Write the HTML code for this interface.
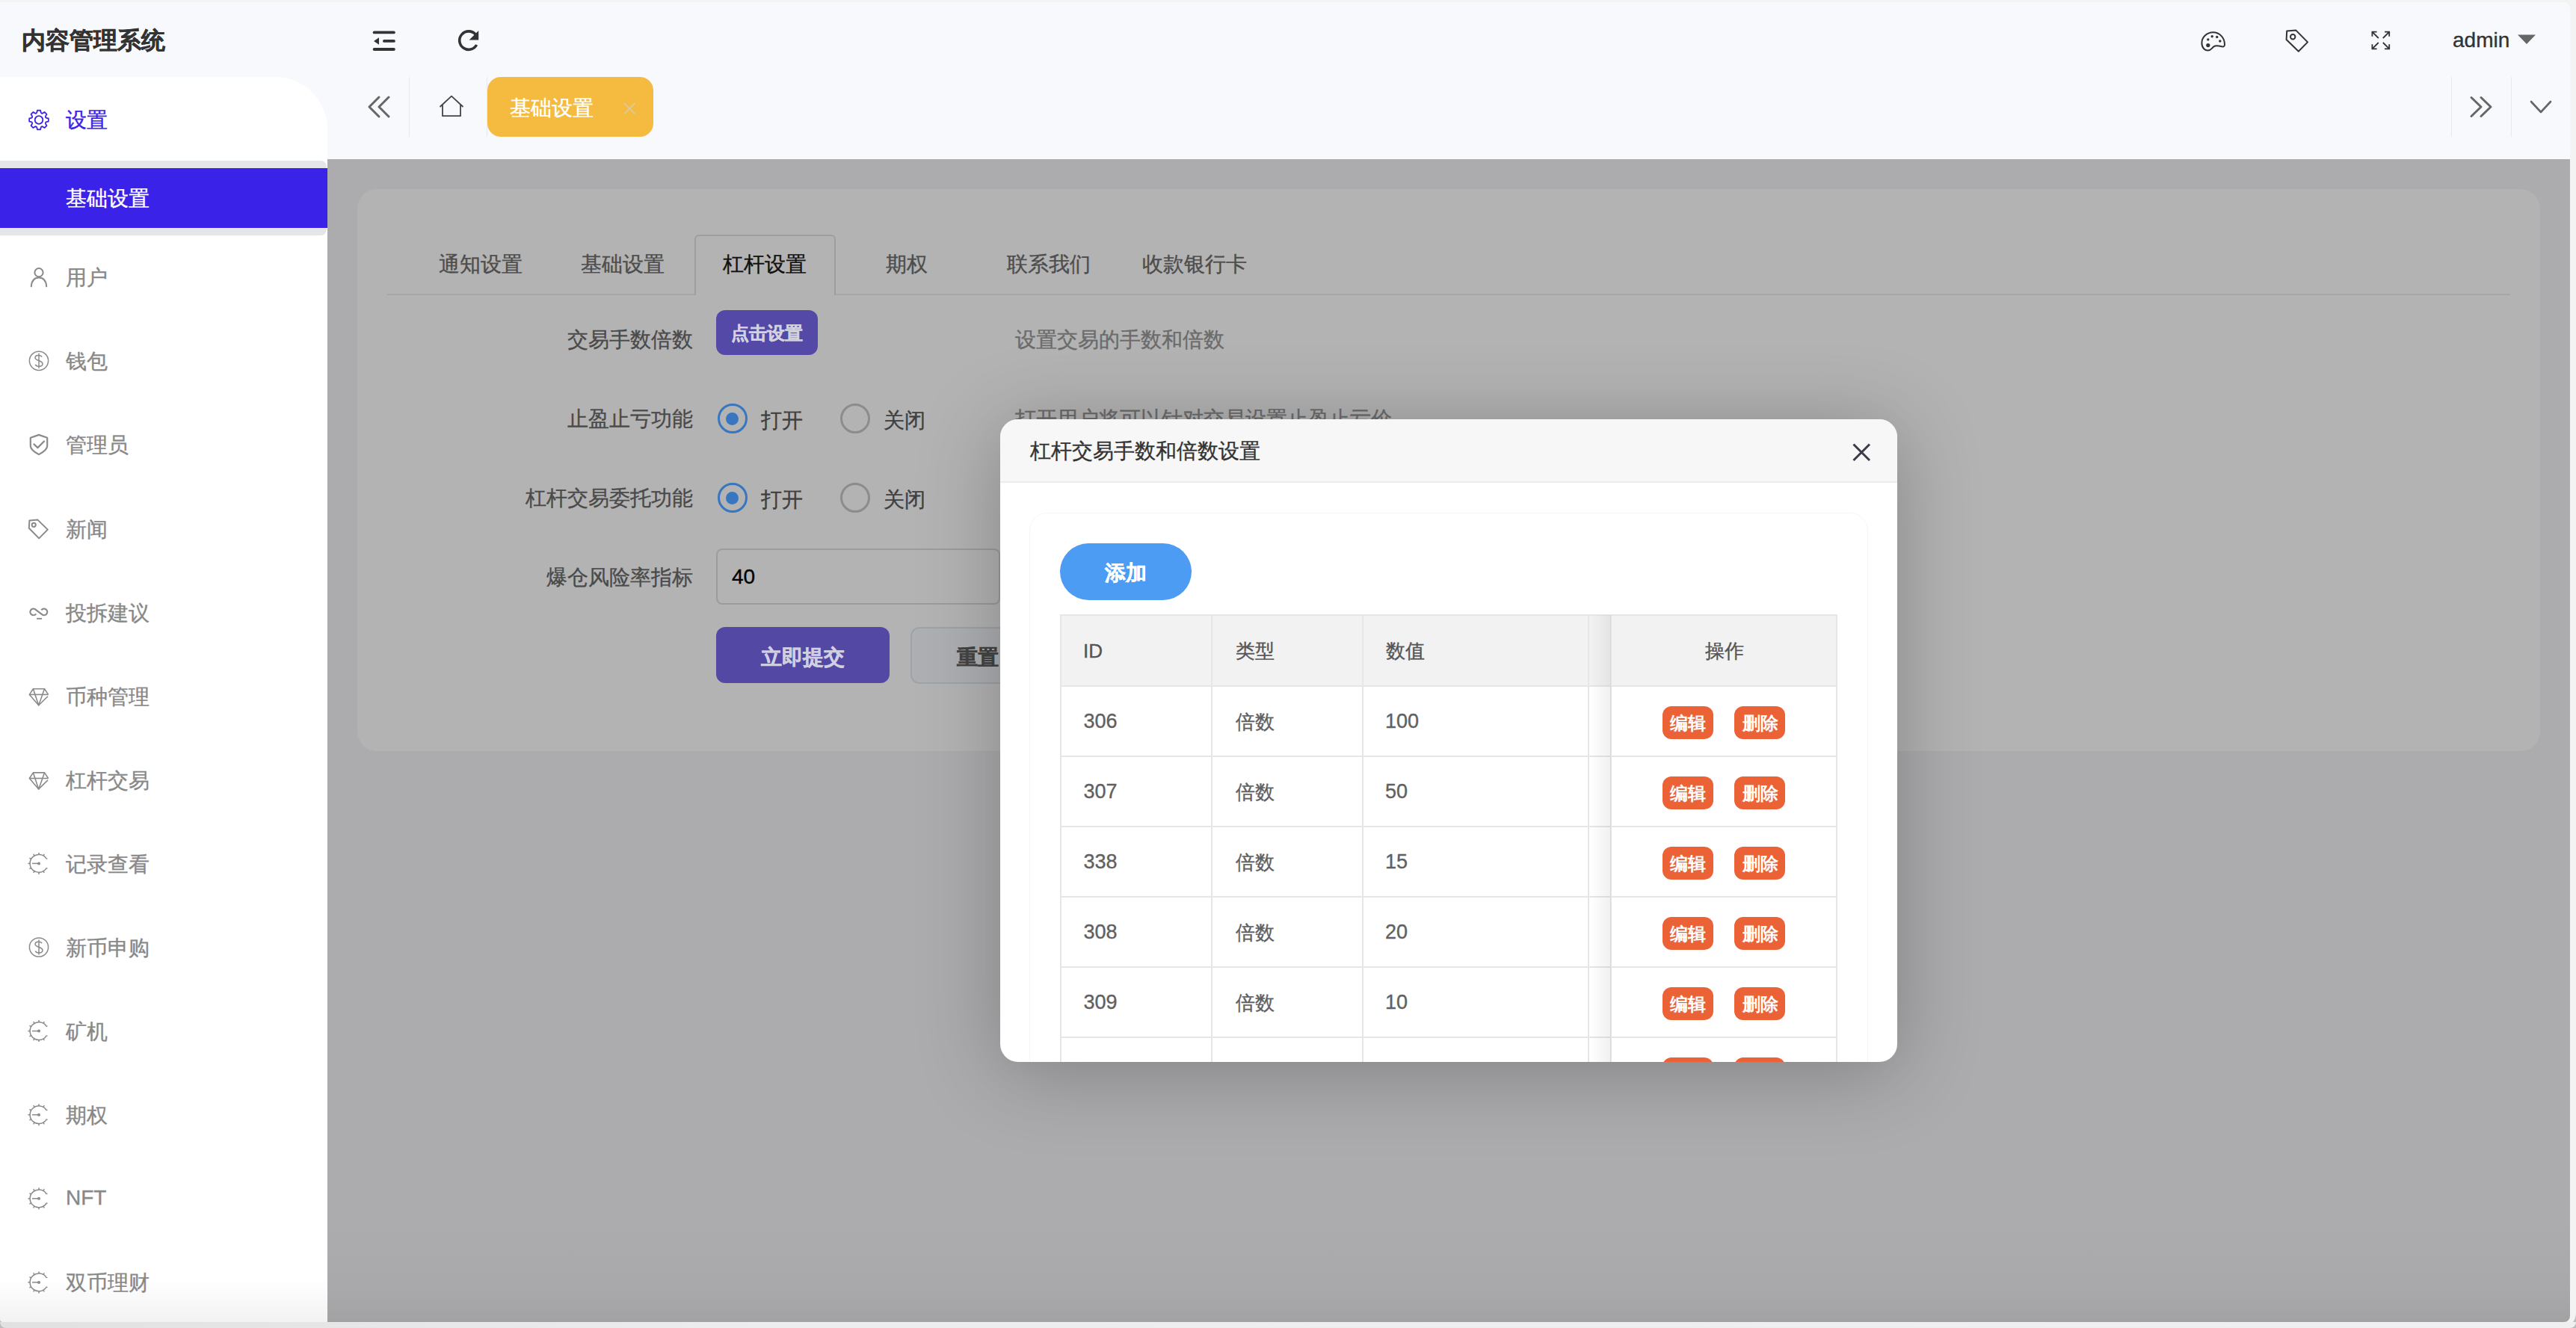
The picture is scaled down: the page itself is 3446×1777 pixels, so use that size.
<!DOCTYPE html><html><head><meta charset="utf-8"><style>
*{box-sizing:border-box;margin:0;padding:0}
html,body{width:3446px;height:1777px;overflow:hidden;background:#bdbdbd;font-family:"Liberation Sans",sans-serif}
#frame{left:0;top:0;width:3446px;height:1777px;background:#f3f3f4;border-radius:0 0 20px 20px;box-shadow:inset 0 -1px 0 rgba(0,0,0,0.0)}
.a{position:absolute}
.t{position:absolute;white-space:nowrap;font-size:28px;line-height:28px;-webkit-text-stroke:0.35px currentColor}
svg{position:absolute;overflow:visible}
#hdr{left:0;top:3px;width:3438px;height:210px;background:#f8f9fc;border-top-right-radius:8px}
#side{left:0;top:103px;width:438px;height:1666px;background:#fff;border-top-right-radius:70px;overflow:hidden;border-bottom-left-radius:4px}
#side .shade{left:0;bottom:0;width:438px;height:60px;background:linear-gradient(to bottom,rgba(0,0,0,0),rgba(0,0,0,0.05))}
#bottom{left:0;top:1769px;width:3446px;height:8px;background:linear-gradient(to right,#e0e1e2,#eceded 30%,#eff0f0);border-radius:0 0 20px 20px}
#main{left:438px;top:213px;width:3000px;height:1556px;background:#acacae;overflow:hidden;border-bottom-right-radius:8px}
#main .shade{left:0;bottom:0;width:3000px;height:140px;background:linear-gradient(to bottom,rgba(0,0,0,0),rgba(0,0,0,0.02) 70%,rgba(0,0,0,0.06))}
.mi{color:#888}
.lbl{color:#4a4a4a;text-align:right;width:400px}
.tab{color:#4d4d4d}
.hint{color:#6b6b6b}
.radio{position:absolute;width:40px;height:40px;border-radius:50%;border:3px solid #8c8c8c}
.radio.on{border-color:#3876c0}
.radio.on::after{content:"";position:absolute;left:8.5px;top:8.5px;width:17px;height:17px;border-radius:50%;background:#3876c0}
#modal{left:1338px;top:561px;width:1200px;height:860px;background:#fff;border-radius:24px;overflow:hidden;box-shadow:0 12px 110px rgba(0,0,0,0.26)}
.hl{position:absolute;height:2px;background:#e6e6e6}
.vl{position:absolute;width:2px;background:#e6e6e6}
.cell{color:#606060}
.ob{position:absolute;width:68px;height:44px;border-radius:12px;background:#ea6236}
.obt{position:absolute;color:#fff;font-weight:bold;font-size:24px;line-height:24px;white-space:nowrap}
</style></head><body>
<div id="frame" class="a"></div>
<div id="hdr" class="a"></div>
<div class="t " style="left:29px;top:38px;font-size:32px;line-height:32px;font-weight:bold;color:#333">内容管理系统</div>
<svg style="left:0;top:0" width="10" height="10">
  <g fill="#333">
    <rect x="498.7" y="41.5" width="30.1" height="3.8" rx="1.9"/>
    <rect x="512" y="53" width="16.8" height="3.8" rx="1.9"/>
    <rect x="498.7" y="64.1" width="30.1" height="3.8" rx="1.9"/>
    <path d="M500 55 L507 50.2 L507 59.8 Z"/>
  </g>
  <path d="M636.2 46.2 A12.2 12.2 0 1 0 637.6 60" fill="none" stroke="#333" stroke-width="3.6"/>
  <path d="M640.2 41 L640.2 53.6 L627.6 53.6 Z" fill="#333"/>
  <g fill="none" stroke="#333" stroke-width="2.0">
    <path d="M2960.5 43.2 C2952 43.2 2945.4 50 2945.4 57.4 C2945.4 64 2949.5 67.6 2953.6 67.6 C2957.5 67.6 2958.6 64.5 2961.4 62.4 C2964.6 60 2968.4 61.4 2972.6 62.4 C2975 63 2976 61.5 2976 59.4 C2976 50.8 2969.5 43.2 2960.5 43.2 Z"/>
  </g>
  <g fill="#333">
    <circle cx="2953.8" cy="60.6" r="2.6"/>
    <circle cx="2953.8" cy="52.9" r="1.7"/>
    <circle cx="2959.2" cy="48.8" r="1.7"/>
    <circle cx="2965.7" cy="49.5" r="1.7"/>
    <circle cx="2969.8" cy="55" r="1.7"/>
  </g>
  <g fill="none" stroke="#333" stroke-width="2.0" stroke-linejoin="round">
    <path d="M3059.2 41.4 L3071.4 40.6 L3087 56.4 L3074.8 68.8 L3058.6 53 Z"/>
    <circle cx="3067.2" cy="49.3" r="3.2"/>
  </g>
  <g fill="none" stroke="#333" stroke-width="1.8">
    <path d="M3173.4 48.8 L3173.4 42.6 L3179.6 42.6 M3173.6 42.8 L3181.8 51"/>
    <path d="M3196.2 48.8 L3196.2 42.6 L3190 42.6 M3196 42.8 L3187.8 51"/>
    <path d="M3173.4 59.2 L3173.4 65.4 L3179.6 65.4 M3173.6 65.2 L3181.8 57"/>
    <path d="M3196.2 59.2 L3196.2 65.4 L3190 65.4 M3196 65.2 L3187.8 57"/>
  </g>
  <path d="M3368 46.6 L3392 46.6 L3380 58.9 Z" fill="#666"/>
</svg>
<div class="t " style="left:3281px;top:40px;color:#333">admin</div>
<div class="a" style="left:546.5px;top:103px;width:1px;height:80px;background:#e9e9ed"></div>
<div class="a" style="left:650.5px;top:103px;width:1px;height:80px;background:#e9e9ed"></div>
<div class="a" style="left:3278.5px;top:103px;width:1px;height:80px;background:#e9e9ed"></div>
<div class="a" style="left:3358.5px;top:103px;width:1px;height:80px;background:#e9e9ed"></div>
<div class="a" style="left:652px;top:103px;width:222px;height:80px;background:#f4bb40;border-radius:18px"></div>
<div class="t " style="left:682px;top:130.5px;color:#fff">基础设置</div>
<svg style="left:0;top:0" width="10" height="10">
  <g fill="none" stroke="#666" stroke-width="3" stroke-linecap="round" stroke-linejoin="round">
    <path d="M507 130 L494 143 L507 156"/>
    <path d="M520 130 L507 143 L520 156"/>
    <path d="M3306 130.5 L3319 143 L3306 155.5"/>
    <path d="M3319 130.5 L3332 143 L3319 155.5"/>
    <path d="M3386 136 L3399 150 L3412 136" stroke-width="2.6"/>
  </g>
  <path d="M588.5 143 L604 128.6 L619.5 143 M592 140 L592 155.2 L616 155.2 L616 140" fill="none" stroke="#444" stroke-width="1.8" stroke-linejoin="round"/>
  <path d="M835 138 L849.5 152.5 M849.5 138 L835 152.5" fill="none" stroke="#d9ccaa" stroke-width="1.6"/>
</svg>
<div id="side" class="a"><div class="shade a"></div></div>
<div class="a" style="left:0;top:215px;width:437px;height:100px;background:#e5e6ea;border-radius:0 8px 8px 0"></div>
<div class="a" style="left:0;top:225px;width:438px;height:80px;background:#3a22e8"></div>
<div class="t " style="left:88px;top:147px;color:#3a22e8">设置</div>
<div class="t " style="left:88px;top:252px;color:#fff">基础设置</div>
<div class="t " style="left:88px;top:358.2px;color:#888">用户</div>
<div class="t " style="left:88px;top:470.3px;color:#888">钱包</div>
<div class="t " style="left:88px;top:582.4px;color:#888">管理员</div>
<div class="t " style="left:88px;top:694.5px;color:#888">新闻</div>
<div class="t " style="left:88px;top:806.6px;color:#888">投拆建议</div>
<div class="t " style="left:88px;top:918.7px;color:#888">币种管理</div>
<div class="t " style="left:88px;top:1030.8px;color:#888">杠杆交易</div>
<div class="t " style="left:88px;top:1142.9px;color:#888">记录查看</div>
<div class="t " style="left:88px;top:1255.0px;color:#888">新币申购</div>
<div class="t " style="left:88px;top:1367.1px;color:#888">矿机</div>
<div class="t " style="left:88px;top:1479.2px;color:#888">期权</div>
<div class="t " style="left:88px;top:1589.3px;color:#888">NFT</div>
<div class="t " style="left:88px;top:1703.4px;color:#888">双币理财</div>
<svg style="left:0;top:0" width="10" height="10"><g transform="translate(52 160.5)" fill="none" stroke="#3a22e8" stroke-width="1.8" stroke-linejoin="round"><path d="M-3.67 -8.87 Q-2.84 -9.17 -2.45 -10.95 L-2.06 -12.74 A12.90 12.90 0 0 1 2.06 -12.74 L2.45 -10.95 Q2.84 -9.17 3.67 -8.87 Q4.48 -8.49 6.02 -9.47 L7.55 -10.46 A12.90 12.90 0 0 1 10.46 -7.55 L9.47 -6.02 Q8.49 -4.48 8.87 -3.67 Q9.17 -2.84 10.95 -2.45 L12.74 -2.06 A12.90 12.90 0 0 1 12.74 2.06 L10.95 2.45 Q9.17 2.84 8.87 3.67 Q8.49 4.48 9.47 6.02 L10.46 7.55 A12.90 12.90 0 0 1 7.55 10.46 L6.02 9.47 Q4.48 8.49 3.67 8.87 Q2.84 9.17 2.45 10.95 L2.06 12.74 A12.90 12.90 0 0 1 -2.06 12.74 L-2.45 10.95 Q-2.84 9.17 -3.67 8.87 Q-4.48 8.49 -6.02 9.47 L-7.55 10.46 A12.90 12.90 0 0 1 -10.46 7.55 L-9.47 6.02 Q-8.49 4.48 -8.87 3.67 Q-9.17 2.84 -10.95 2.45 L-12.74 2.06 A12.90 12.90 0 0 1 -12.74 -2.06 L-10.95 -2.45 Q-9.17 -2.84 -8.87 -3.67 Q-8.49 -4.48 -9.47 -6.02 L-10.46 -7.55 A12.90 12.90 0 0 1 -7.55 -10.46 L-6.02 -9.47 Q-4.48 -8.49 -3.67 -8.87 Z"/><circle r="5.3"/></g><g fill="none" stroke="#8a8a8a" stroke-width="2" stroke-linecap="round"><circle cx="52" cy="364.7" r="5.6"/><path d="M41.8 383.3 C42.5 374.2 47 371.5 52 371.5 C57 371.5 61.5 374.2 62.2 383.3"/></g><g fill="none" stroke="#8a8a8a" stroke-width="1.5"><circle cx="52" cy="482.8" r="12.6"/><path d="M56 477.6 C55 474.8 47 474.3 47 478.8 C47 482.8 57 482.3 57 486.8 C57 491.3 48.5 491.3 47.4 487.8"/><path d="M52 472.8 L52 492.8"/></g><g fill="none" stroke="#8a8a8a" stroke-width="2.2" stroke-linejoin="round" stroke-linecap="round"><path d="M52 581.9 L63.2 585.6999999999999 L63.2 596.4 C63.2 601.9 57 605.4 52 608.1 C47 605.4 40.8 601.9 40.8 596.4 L40.8 585.6999999999999 Z"/><path d="M45.4 594.4 L50.4 599.1 L59 590.5"/></g><g fill="none" stroke="#8a8a8a" stroke-width="2" stroke-linejoin="round"><path d="M39.4 696.4 L50.4 695.6 L63.8 708.6 L52.2 720.4 L38.8 706.8 Z"/><circle cx="45.2" cy="702.3" r="2.6"/></g><g fill="none" stroke="#8a8a8a" stroke-width="2.2"><path d="M48.22 821.27 A4.3 4.3 0 1 1 47.17 815.28 L56.43 822.32 A4.3 4.3 0 1 0 55.38 816.33"/><path d="M49.2 827.8000000000001 L56.1 827.8000000000001" stroke-width="1.9"/></g><g fill="none" stroke="#8a8a8a" stroke-width="1.6" stroke-linejoin="round"><path d="M64.0 931.8 L51.7 943.8 L39.4 929.4 L44.4 921.8 L59.5 921.8 L64.6 929.4"/><path d="M39.4 929.4 L64.6 929.4"/><path d="M44.4 921.8 L51.7 943.8 L59.5 921.8"/></g><g fill="none" stroke="#8a8a8a" stroke-width="1.6" stroke-linejoin="round"><path d="M64.0 1043.9 L51.7 1055.9 L39.4 1041.5 L44.4 1033.9 L59.5 1033.9 L64.6 1041.5"/><path d="M39.4 1041.5 L64.6 1041.5"/><path d="M44.4 1033.9 L51.7 1055.9 L59.5 1033.9"/></g><g fill="none" stroke="#8a8a8a" stroke-width="1.5"><path d="M63.48 1149.12 L61.98 1148.92 A11.9 11.9 0 1 0 61.98 1161.88 L63.48 1161.68" /><path d="M57.95 1145.09 L59.25 1142.84"/><path d="M52.00 1143.50 L52.00 1140.90"/><path d="M46.05 1145.09 L44.75 1142.84"/><path d="M41.69 1149.45 L39.44 1148.15"/><path d="M40.10 1155.40 L37.50 1155.40"/><path d="M41.69 1161.35 L39.44 1162.65"/><path d="M46.05 1165.71 L44.75 1167.96"/><path d="M52.00 1167.30 L52.00 1169.90"/><path d="M57.95 1165.71 L59.25 1167.96"/><path d="M43 1155.4 L52 1155.4"/><circle cx="52" cy="1155.4" r="2" fill="#8a8a8a" stroke="none"/></g><g fill="none" stroke="#8a8a8a" stroke-width="1.5"><circle cx="52" cy="1267.5" r="12.6"/><path d="M56 1262.3 C55 1259.5 47 1259.0 47 1263.5 C47 1267.5 57 1267.0 57 1271.5 C57 1276.0 48.5 1276.0 47.4 1272.5"/><path d="M52 1257.5 L52 1277.5"/></g><g fill="none" stroke="#8a8a8a" stroke-width="1.5"><path d="M63.48 1373.32 L61.98 1373.12 A11.9 11.9 0 1 0 61.98 1386.08 L63.48 1385.88" /><path d="M57.95 1369.29 L59.25 1367.04"/><path d="M52.00 1367.70 L52.00 1365.10"/><path d="M46.05 1369.29 L44.75 1367.04"/><path d="M41.69 1373.65 L39.44 1372.35"/><path d="M40.10 1379.60 L37.50 1379.60"/><path d="M41.69 1385.55 L39.44 1386.85"/><path d="M46.05 1389.91 L44.75 1392.16"/><path d="M52.00 1391.50 L52.00 1394.10"/><path d="M57.95 1389.91 L59.25 1392.16"/><path d="M43 1379.6 L52 1379.6"/><circle cx="52" cy="1379.6" r="2" fill="#8a8a8a" stroke="none"/></g><g fill="none" stroke="#8a8a8a" stroke-width="1.5"><path d="M63.48 1485.42 L61.98 1485.22 A11.9 11.9 0 1 0 61.98 1498.18 L63.48 1497.98" /><path d="M57.95 1481.39 L59.25 1479.14"/><path d="M52.00 1479.80 L52.00 1477.20"/><path d="M46.05 1481.39 L44.75 1479.14"/><path d="M41.69 1485.75 L39.44 1484.45"/><path d="M40.10 1491.70 L37.50 1491.70"/><path d="M41.69 1497.65 L39.44 1498.95"/><path d="M46.05 1502.01 L44.75 1504.26"/><path d="M52.00 1503.60 L52.00 1506.20"/><path d="M57.95 1502.01 L59.25 1504.26"/><path d="M43 1491.7 L52 1491.7"/><circle cx="52" cy="1491.7" r="2" fill="#8a8a8a" stroke="none"/></g><g fill="none" stroke="#8a8a8a" stroke-width="1.5"><path d="M63.48 1597.52 L61.98 1597.32 A11.9 11.9 0 1 0 61.98 1610.28 L63.48 1610.08" /><path d="M57.95 1593.49 L59.25 1591.24"/><path d="M52.00 1591.90 L52.00 1589.30"/><path d="M46.05 1593.49 L44.75 1591.24"/><path d="M41.69 1597.85 L39.44 1596.55"/><path d="M40.10 1603.80 L37.50 1603.80"/><path d="M41.69 1609.75 L39.44 1611.05"/><path d="M46.05 1614.11 L44.75 1616.36"/><path d="M52.00 1615.70 L52.00 1618.30"/><path d="M57.95 1614.11 L59.25 1616.36"/><path d="M43 1603.8 L52 1603.8"/><circle cx="52" cy="1603.8" r="2" fill="#8a8a8a" stroke="none"/></g><g fill="none" stroke="#8a8a8a" stroke-width="1.5"><path d="M63.48 1709.62 L61.98 1709.42 A11.9 11.9 0 1 0 61.98 1722.38 L63.48 1722.18" /><path d="M57.95 1705.59 L59.25 1703.34"/><path d="M52.00 1704.00 L52.00 1701.40"/><path d="M46.05 1705.59 L44.75 1703.34"/><path d="M41.69 1709.95 L39.44 1708.65"/><path d="M40.10 1715.90 L37.50 1715.90"/><path d="M41.69 1721.85 L39.44 1723.15"/><path d="M46.05 1726.21 L44.75 1728.46"/><path d="M52.00 1727.80 L52.00 1730.40"/><path d="M57.95 1726.21 L59.25 1728.46"/><path d="M43 1715.9 L52 1715.9"/><circle cx="52" cy="1715.9" r="2" fill="#8a8a8a" stroke="none"/></g></svg>
<div id="main" class="a"><div class="shade a"></div></div>
<div class="a" style="left:478px;top:253px;width:2920px;height:752px;background:#b3b3b3;border-radius:26px"></div>
<div class="a" style="left:518px;top:393px;width:2840px;height:2px;background:#a6a6a6"></div>
<div class="a" style="left:928.5px;top:313.5px;width:189px;height:81.5px;border:2px solid #9e9e9e;border-bottom:none;border-radius:6px 6px 0 0;background:#b3b3b3"></div>
<div class="t " style="left:587px;top:340px;color:#4d4d4d">通知设置</div>
<div class="t " style="left:777px;top:340px;color:#4d4d4d">基础设置</div>
<div class="t " style="left:1185px;top:340px;color:#4d4d4d">期权</div>
<div class="t " style="left:1347px;top:340px;color:#4d4d4d">联系我们</div>
<div class="t " style="left:1528px;top:340px;color:#4d4d4d">收款银行卡</div>
<div class="t " style="left:967px;top:340px;color:#111">杠杆设置</div>
<div class="t" style="left:527px;top:440.5px;width:400px;text-align:right;color:#4a4a4a">交易手数倍数</div>
<div class="t" style="left:527px;top:547px;width:400px;text-align:right;color:#4a4a4a">止盈止亏功能</div>
<div class="t" style="left:527px;top:653px;width:400px;text-align:right;color:#4a4a4a">杠杆交易委托功能</div>
<div class="t" style="left:527px;top:758.5px;width:400px;text-align:right;color:#4a4a4a">爆仓风险率指标</div>
<div class="a" style="left:958px;top:415px;width:136px;height:59.5px;background:#5549a8;border-radius:12px"></div>
<div class="t" style="left:978px;top:434px;font-size:24px;line-height:24px;font-weight:bold;color:#d2d1de">点击设置</div>
<div class="t " style="left:1358px;top:440.5px;color:#6b6b6b">设置交易的手数和倍数</div>
<div class="t " style="left:1358px;top:546.5px;color:#6b6b6b">打开用户将可以针对交易设置止盈止亏价</div>
<div class="radio on" style="left:959.8px;top:540.3px"></div>
<div class="radio" style="left:1124px;top:540.3px"></div>
<div class="t " style="left:1018px;top:549.3px;color:#3f3f3f">打开</div>
<div class="t " style="left:1182px;top:549.3px;color:#3f3f3f">关闭</div>
<div class="radio on" style="left:959.8px;top:646.3px"></div>
<div class="radio" style="left:1124px;top:646.3px"></div>
<div class="t " style="left:1018px;top:655.3px;color:#3f3f3f">打开</div>
<div class="t " style="left:1182px;top:655.3px;color:#3f3f3f">关闭</div>
<div class="a" style="left:958px;top:733.5px;width:380px;height:75px;border:2px solid #9c9c9c;border-radius:8px;background:#b3b3b3"></div>
<div class="t " style="left:979px;top:758px;color:#000">40</div>
<div class="a" style="left:958px;top:839px;width:231.5px;height:75px;background:#5349a5;border-radius:12px"></div>
<div class="t " style="left:1018px;top:866px;font-weight:bold;color:#d0cfe2">立即提交</div>
<div class="a" style="left:1218px;top:839px;width:200px;height:75.5px;border:2px solid #9da3a8;border-radius:12px;background:#aeafb2"></div>
<div class="t " style="left:1280px;top:866px;font-weight:bold;color:#444">重置</div>
<div id="modal" class="a">
<div class="a" style="left:0px;top:0px;width:1200px;height:85px;background:#f7f7f7;border-bottom:2px solid #ececec"></div><div class="t" style="left:40px;top:29px;color:#333">杠杆交易手数和倍数设置</div><svg style="left:0;top:0" width="10" height="10"><path d="M1141.5 33.5 L1163 55 M1163 33.5 L1141.5 55" fill="none" stroke="#3a3a48" stroke-width="3"/></svg><div class="a" style="left:39px;top:125px;width:1122px;height:800px;border:1.5px solid #f5f5f6;border-radius:24px"></div><div class="a" style="left:80px;top:166px;width:175.5px;height:75.5px;background:#4c9cf4;border-radius:38px"></div><div class="t" style="left:140px;top:192px;font-weight:bold;color:#fff">添加</div><div class="a" style="left:80.5px;top:262px;width:1038.5px;height:95px;background:#f2f2f2"></div><div class="hl" style="left:80.5px;top:261px;width:1039px"></div><div class="hl" style="left:80.5px;top:355.6px;width:1039px"></div><div class="hl" style="left:80.5px;top:449.6px;width:1039px"></div><div class="hl" style="left:80.5px;top:543.5999999999999px;width:1039px"></div><div class="hl" style="left:80.5px;top:637.5px;width:1039px"></div><div class="hl" style="left:80.5px;top:731.5px;width:1039px"></div><div class="hl" style="left:80.5px;top:825.5px;width:1039px"></div><div class="vl" style="left:79.5px;top:261px;height:700px"></div><div class="vl" style="left:281.5px;top:261px;height:700px"></div><div class="vl" style="left:484px;top:261px;height:700px"></div><div class="vl" style="left:786px;top:261px;height:700px"></div><div class="vl" style="left:816px;top:261px;height:700px"></div><div class="vl" style="left:1117.5px;top:261px;height:700px"></div><div class="a" style="left:789px;top:262px;width:28px;height:700px;background:linear-gradient(to right,rgba(0,0,0,0),rgba(0,0,0,0.06))"></div><div class="t" style="left:111px;top:296.5px;color:#555;font-size:26px;line-height:26px">ID</div><div class="t" style="left:314.5px;top:297px;color:#555;font-size:25.5px;line-height:26px">类型</div><div class="t" style="left:516px;top:297px;color:#555;font-size:25.5px;line-height:26px">数值</div><div class="t" style="left:943px;top:297px;color:#555;font-size:25.5px;line-height:26px">操作</div><div class="t" style="left:111.5px;top:391px;color:#606060;font-size:27px;line-height:27px">306</div><div class="t" style="left:314.5px;top:392px;color:#606060;font-size:25.5px;line-height:26px">倍数</div><div class="t" style="left:515px;top:391px;color:#606060;font-size:27px;line-height:27px">100</div><div class="a" style="left:885.6999999999998px;top:384px;width:68px;height:44px;background:#ea6236;border-radius:12px"></div><div class="a" style="left:982.1999999999998px;top:384px;width:68px;height:44px;background:#ea6236;border-radius:12px"></div><div class="obt" style="left:896px;top:395px">编辑</div><div class="obt" style="left:992.5px;top:395px">删除</div><div class="t" style="left:111.5px;top:485px;color:#606060;font-size:27px;line-height:27px">307</div><div class="t" style="left:314.5px;top:486px;color:#606060;font-size:25.5px;line-height:26px">倍数</div><div class="t" style="left:515px;top:485px;color:#606060;font-size:27px;line-height:27px">50</div><div class="a" style="left:885.6999999999998px;top:478px;width:68px;height:44px;background:#ea6236;border-radius:12px"></div><div class="a" style="left:982.1999999999998px;top:478px;width:68px;height:44px;background:#ea6236;border-radius:12px"></div><div class="obt" style="left:896px;top:489px">编辑</div><div class="obt" style="left:992.5px;top:489px">删除</div><div class="t" style="left:111.5px;top:579px;color:#606060;font-size:27px;line-height:27px">338</div><div class="t" style="left:314.5px;top:580px;color:#606060;font-size:25.5px;line-height:26px">倍数</div><div class="t" style="left:515px;top:579px;color:#606060;font-size:27px;line-height:27px">15</div><div class="a" style="left:885.6999999999998px;top:572px;width:68px;height:44px;background:#ea6236;border-radius:12px"></div><div class="a" style="left:982.1999999999998px;top:572px;width:68px;height:44px;background:#ea6236;border-radius:12px"></div><div class="obt" style="left:896px;top:583px">编辑</div><div class="obt" style="left:992.5px;top:583px">删除</div><div class="t" style="left:111.5px;top:673px;color:#606060;font-size:27px;line-height:27px">308</div><div class="t" style="left:314.5px;top:674px;color:#606060;font-size:25.5px;line-height:26px">倍数</div><div class="t" style="left:515px;top:673px;color:#606060;font-size:27px;line-height:27px">20</div><div class="a" style="left:885.6999999999998px;top:666px;width:68px;height:44px;background:#ea6236;border-radius:12px"></div><div class="a" style="left:982.1999999999998px;top:666px;width:68px;height:44px;background:#ea6236;border-radius:12px"></div><div class="obt" style="left:896px;top:677px">编辑</div><div class="obt" style="left:992.5px;top:677px">删除</div><div class="t" style="left:111.5px;top:767px;color:#606060;font-size:27px;line-height:27px">309</div><div class="t" style="left:314.5px;top:768px;color:#606060;font-size:25.5px;line-height:26px">倍数</div><div class="t" style="left:515px;top:767px;color:#606060;font-size:27px;line-height:27px">10</div><div class="a" style="left:885.6999999999998px;top:760px;width:68px;height:44px;background:#ea6236;border-radius:12px"></div><div class="a" style="left:982.1999999999998px;top:760px;width:68px;height:44px;background:#ea6236;border-radius:12px"></div><div class="obt" style="left:896px;top:771px">编辑</div><div class="obt" style="left:992.5px;top:771px">删除</div><div class="t" style="left:111.5px;top:861px;color:#606060;font-size:27px;line-height:27px">310</div><div class="t" style="left:314.5px;top:862px;color:#606060;font-size:25.5px;line-height:26px">倍数</div><div class="t" style="left:515px;top:861px;color:#606060;font-size:27px;line-height:27px">5</div><div class="a" style="left:885.6999999999998px;top:854px;width:68px;height:44px;background:#ea6236;border-radius:12px"></div><div class="a" style="left:982.1999999999998px;top:854px;width:68px;height:44px;background:#ea6236;border-radius:12px"></div><div class="obt" style="left:896px;top:865px">编辑</div><div class="obt" style="left:992.5px;top:865px">删除</div>
</div>
<div id="bottom" class="a"></div>
</body></html>
